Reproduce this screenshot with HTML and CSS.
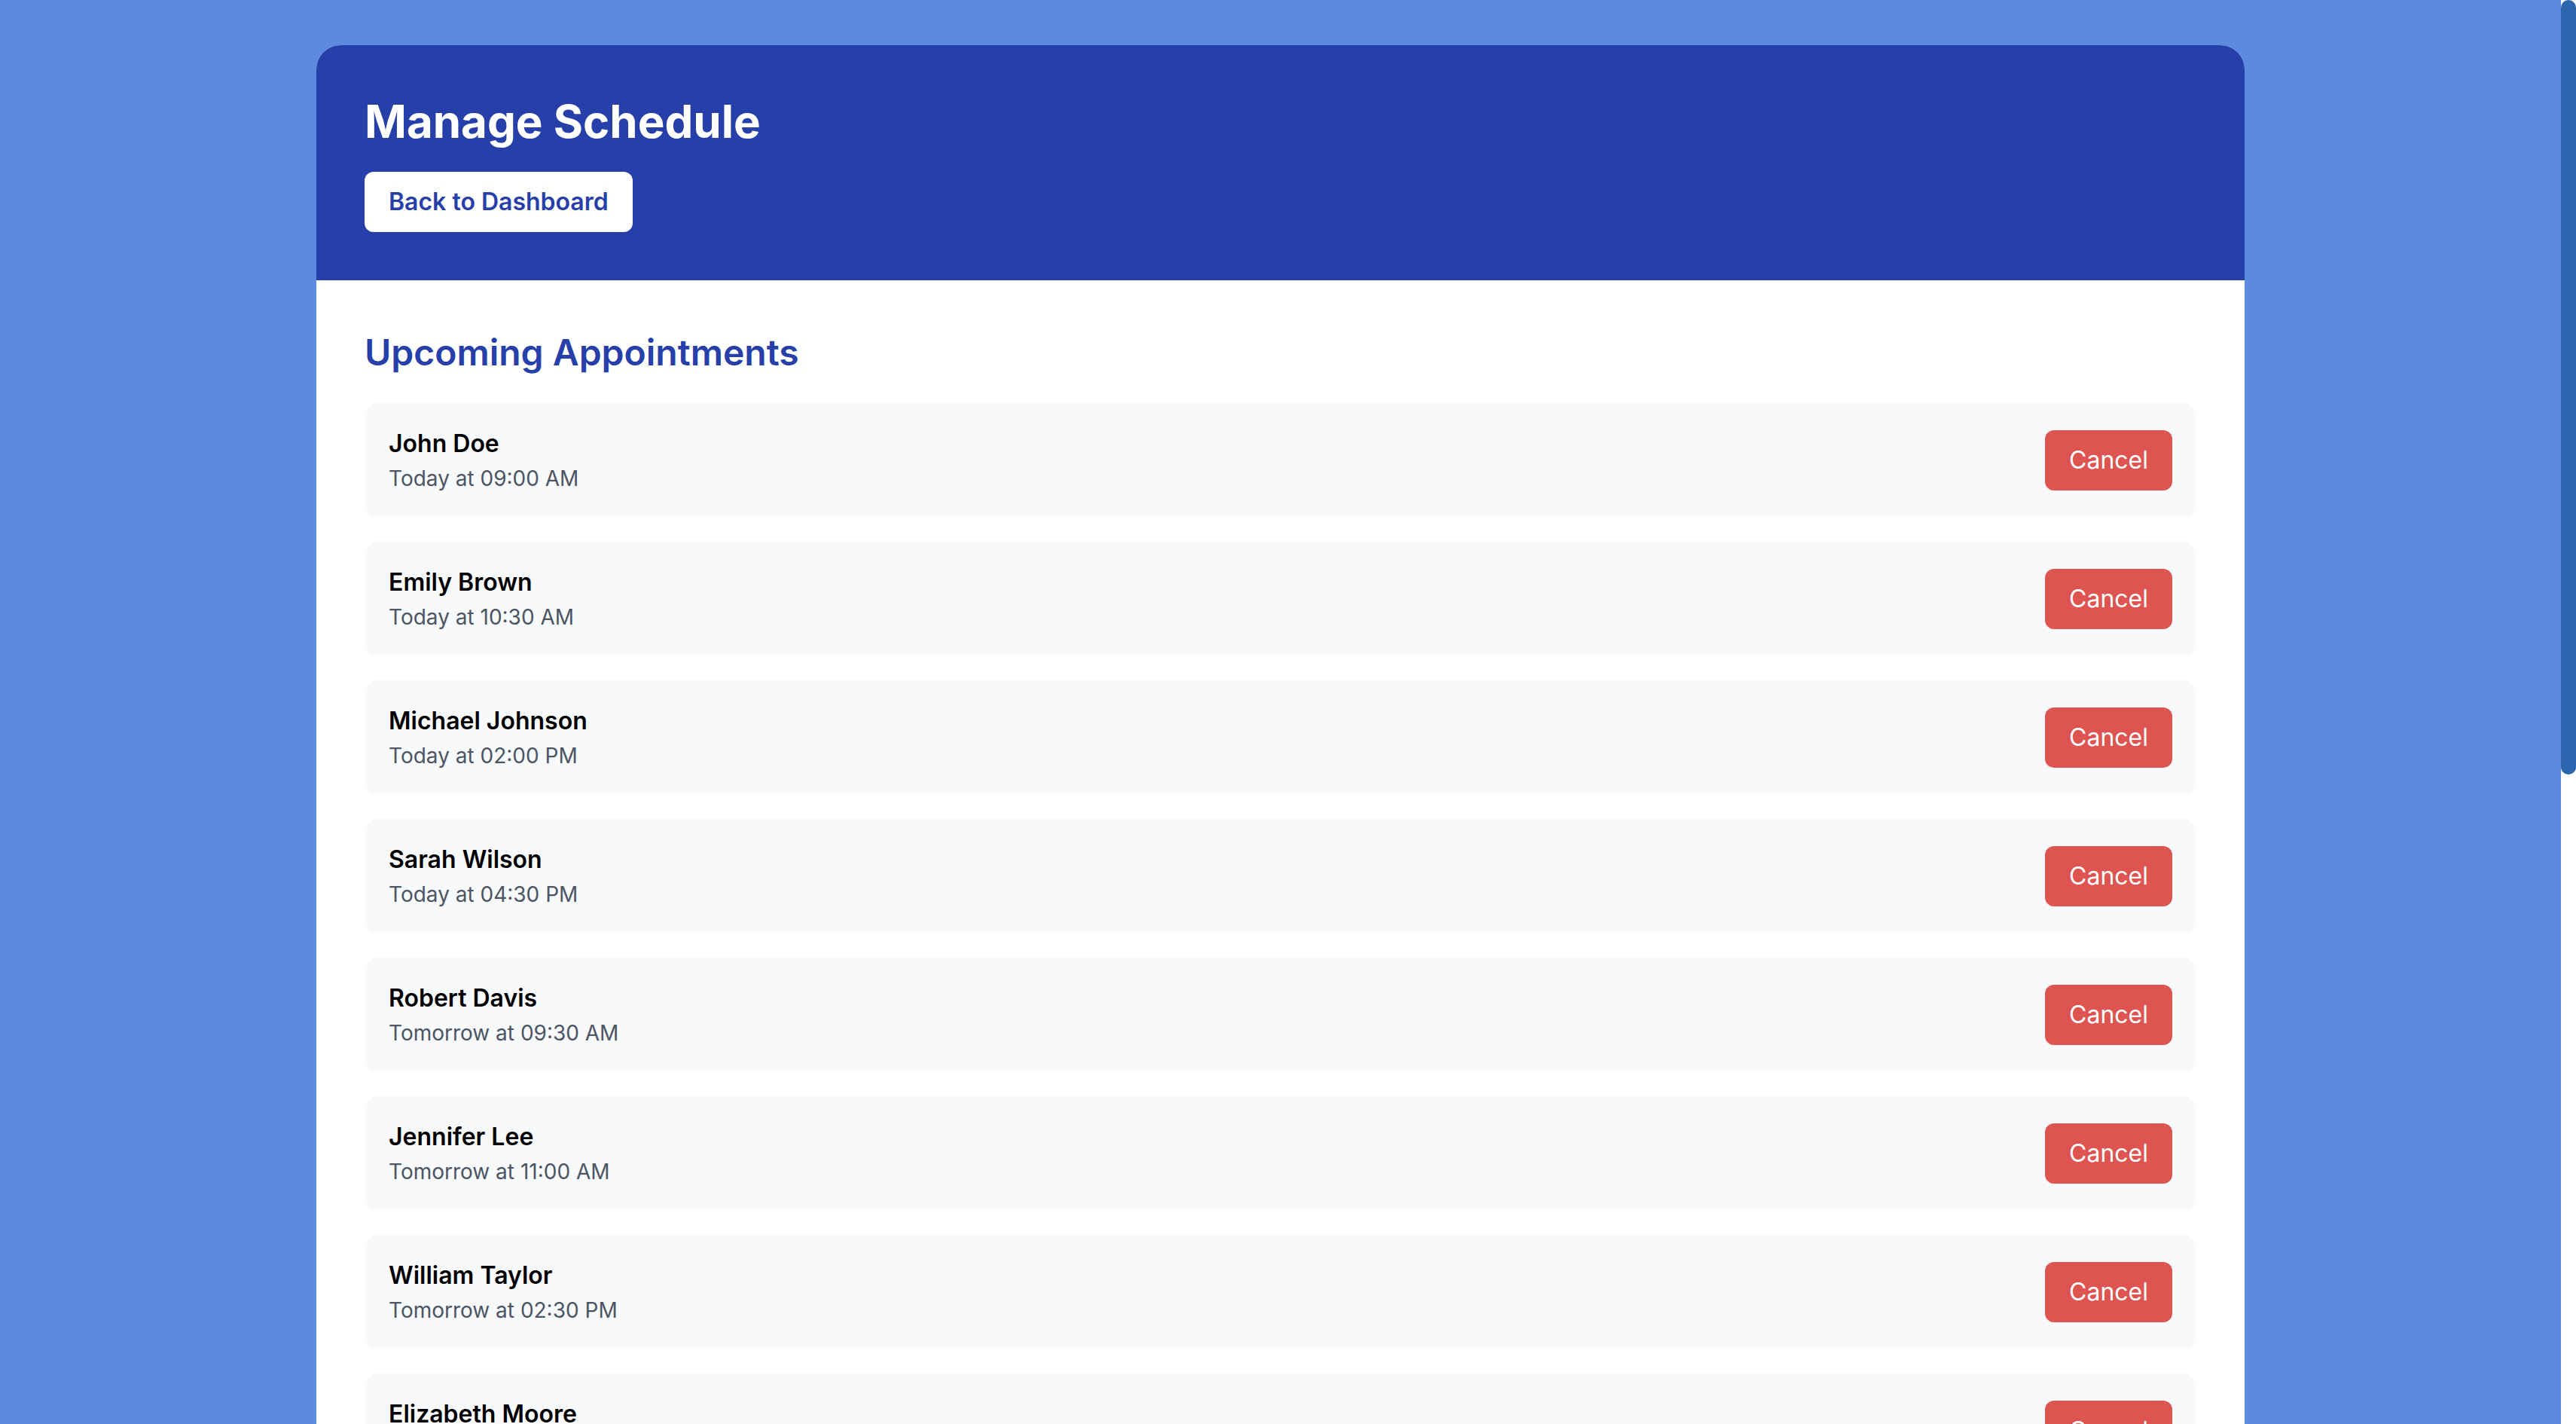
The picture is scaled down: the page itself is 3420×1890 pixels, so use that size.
FILE: index.html
```html
<!DOCTYPE html>
<html lang="en">
<head>
<meta charset="utf-8">
<title>Manage Schedule</title>
<link rel="stylesheet" href="styles.css">
</head>
<body>
<div class="container">
  <header class="header">
    <h1 class="title">Manage Schedule</h1>
    <button class="back-btn">Back to Dashboard</button>
  </header>
  <main class="content">
    <h2 class="section-title">Upcoming Appointments</h2>
    <div class="list">
      <div class="card"><div class="info"><div class="name">John Doe</div><div class="time">Today at 09:00 AM</div></div><button class="cancel-btn">Cancel</button></div>
      <div class="card"><div class="info"><div class="name">Emily Brown</div><div class="time">Today at 10:30 AM</div></div><button class="cancel-btn">Cancel</button></div>
      <div class="card"><div class="info"><div class="name">Michael Johnson</div><div class="time">Today at 02:00 PM</div></div><button class="cancel-btn">Cancel</button></div>
      <div class="card"><div class="info"><div class="name">Sarah Wilson</div><div class="time">Today at 04:30 PM</div></div><button class="cancel-btn">Cancel</button></div>
      <div class="card"><div class="info"><div class="name">Robert Davis</div><div class="time">Tomorrow at 09:30 AM</div></div><button class="cancel-btn">Cancel</button></div>
      <div class="card"><div class="info"><div class="name">Jennifer Lee</div><div class="time">Tomorrow at 11:00 AM</div></div><button class="cancel-btn">Cancel</button></div>
      <div class="card"><div class="info"><div class="name">William Taylor</div><div class="time">Tomorrow at 02:30 PM</div></div><button class="cancel-btn">Cancel</button></div>
      <div class="card"><div class="info"><div class="name">Elizabeth Moore</div><div class="time">Tomorrow at 04:00 PM</div></div><button class="cancel-btn">Cancel</button></div>
      <div class="card"><div class="info"><div class="name">David Anderson</div><div class="time">Friday at 09:00 AM</div></div><button class="cancel-btn">Cancel</button></div>
      <div class="card"><div class="info"><div class="name">Jessica Thomas</div><div class="time">Friday at 10:30 AM</div></div><button class="cancel-btn">Cancel</button></div>
      <div class="card"><div class="info"><div class="name">James Jackson</div><div class="time">Friday at 01:00 PM</div></div><button class="cancel-btn">Cancel</button></div>
      <div class="card"><div class="info"><div class="name">Linda White</div><div class="time">Friday at 03:30 PM</div></div><button class="cancel-btn">Cancel</button></div>
      <div class="card"><div class="info"><div class="name">Daniel Harris</div><div class="time">Monday at 09:30 AM</div></div><button class="cancel-btn">Cancel</button></div>
      <div class="card"><div class="info"><div class="name">Patricia Martin</div><div class="time">Monday at 11:30 AM</div></div><button class="cancel-btn">Cancel</button></div>
      <div class="card"><div class="info"><div class="name">Thomas Garcia</div><div class="time">Monday at 02:00 PM</div></div><button class="cancel-btn">Cancel</button></div>
    </div>
  </main>
</div>
<div class="scrollbar" aria-hidden="true"><div class="scrollbar-thumb"></div></div>
</body>
</html>
```

FILE: styles.css
```css
html {
  background: #5c8ae0;
}
body {
  margin: 0;
  padding: 60px 20px 150px 0;
  background: #5c8ae0;
  font-family: Inter, "Liberation Sans", sans-serif;
}
.container {
  max-width: 2560px;
  margin: 0 auto;
  background: #ffffff;
  border-radius: 32px;
  overflow: hidden;
}
.header {
  background: #2740a9;
  padding: 64px;
}
.title {
  margin: 0 0 30px;
  font-size: 60px;
  line-height: 74px;
  font-weight: 700;
  color: #ffffff;
}
.back-btn {
  display: inline-block;
  background: #ffffff;
  color: #2740a9;
  border: none;
  border-radius: 12px;
  padding: 20px 32px;
  font-family: inherit;
  font-size: 32px;
  line-height: 40px;
  font-weight: 600;
}
.content {
  padding: 64px;
}
.section-title {
  margin: 2px 0 37px;
  font-size: 48px;
  line-height: 60px;
  font-weight: 600;
  color: #2740a9;
}
.list {
  display: flex;
  flex-direction: column;
  gap: 32px;
}
.card {
  display: flex;
  justify-content: space-between;
  align-items: center;
  background: #f8f9fb;
  border-radius: 16px;
  padding: 32px;
}
.name {
  font-size: 32px;
  line-height: 44px;
  font-weight: 600;
  color: #000000;
}
.time {
  margin-top: 4px;
  font-size: 28px;
  line-height: 40px;
  color: #4b5563;
}
.cancel-btn {
  background: #de5450;
  color: #ffffff;
  border: none;
  border-radius: 12px;
  padding: 20px 32px;
  font-family: inherit;
  font-size: 32px;
  line-height: 40px;
  font-weight: 400;
}
.scrollbar {
  position: fixed;
  top: 0;
  right: 0;
  width: 20px;
  height: 100vh;
  background: #ffffff;
}
.scrollbar-thumb {
  height: 1028px;
  background: #2a65ad;
  border-radius: 10px;
}
```
